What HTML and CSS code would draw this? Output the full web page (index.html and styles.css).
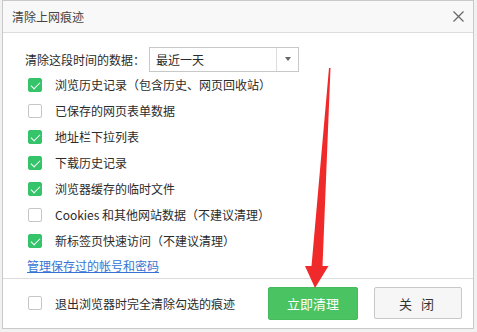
FILE: index.html
```html
<!DOCTYPE html>
<html lang="zh-CN">
<head>
    <meta charset="UTF-8">
    <title>清除上网痕迹</title>
    <link rel="stylesheet" href="styles.css">
</head>
<body>
<div class="dialog">
    <!-- Title bar -->
    <div class="dialog-head">
        <span class="dialog-title">清除上网痕迹</span>
        <span class="close">
            <svg width="11" height="11" viewBox="0 0 11 11"><path d="M0.5 0.5 L10.5 10.5 M10.5 0.5 L0.5 10.5" stroke="#666" stroke-width="1.2" fill="none"/></svg>
        </span>
    </div>

    <!-- Options -->
    <div class="dialog-body">
        <div class="range-row">
            <span class="range-label">清除这段时间的数据：</span>
            <div class="select">
                <span class="select-value">最近一天</span>
                <span class="select-arrow"></span>
            </div>
        </div>
        <ul class="options">
            <li><span class="check on"></span>浏览历史记录（包含历史、网页回收站）</li>
            <li><span class="check"></span>已保存的网页表单数据</li>
            <li><span class="check on"></span>地址栏下拉列表</li>
            <li><span class="check on"></span>下载历史记录</li>
            <li><span class="check on"></span>浏览器缓存的临时文件</li>
            <li><span class="check"></span>Cookies 和其他网站数据（不建议清理）</li>
            <li><span class="check on"></span>新标签页快速访问（不建议清理）</li>
        </ul>
        <a class="manage-link" href="#">管理保存过的帐号和密码</a>
    </div>

    <!-- Footer -->
    <div class="dialog-foot">
        <label class="exit-option"><span class="check"></span>退出浏览器时完全清除勾选的痕迹</label>
        <button class="btn btn-primary">立即清理</button>
        <button class="btn btn-default">关 闭</button>
    </div>
</div>

<!-- red annotation arrow drawn over the dialog -->
<svg class="arrow" width="477" height="332" viewBox="0 0 477 332">
    <polygon points="329,68 330.5,68 322.5,266 328.5,266 315,288 305,266 311.5,266" fill="#f02a2a"/>
</svg>
</body>
</html>
```

FILE: styles.css
```css
* {
    margin: 0;
    padding: 0;
    box-sizing: border-box;
}

body {
    font-family: "Noto Sans CJK SC", "Noto Sans", sans-serif;
    font-size: 12px;
    color: #2b2b2b;
    background: #f1f1f1;
    width: 477px;
    height: 332px;
    position: relative;
    overflow: hidden;
}

.dialog {
    margin-left: 2px;
    width: 472px;
    height: 329px;
    background: #fff;
    border: 1px solid #c9c9c9;
    display: flex;
    flex-direction: column;
}

/* Title bar */
.dialog-head {
    height: 32px;
    background: #f8f8f8;
    border-bottom: 1px solid #dcdcdc;
    display: flex;
    align-items: center;
    justify-content: space-between;
    padding: 0 8px 0 9px;
}

.dialog-title {
    font-size: 12px;
    color: #444;
}

.close {
    display: flex;
    width: 14px;
    justify-content: center;
}

/* Body */
.dialog-body {
    padding: 14px 0 0 22px;
    flex: 1;
}

.range-row {
    display: flex;
    align-items: center;
    height: 25px;
}

.range-label {
    width: 124px;
}

.select {
    width: 150px;
    height: 25px;
    border: 1px solid #c8c8c8;
    display: flex;
    align-items: center;
}

.select-value {
    flex: 1;
    padding-left: 6px;
}

.select-arrow {
    width: 22px;
    height: 100%;
    border-left: 1px solid #dcdcdc;
    display: flex;
    align-items: center;
    justify-content: center;
}

.select-arrow::after {
    content: "";
    border-left: 3px solid transparent;
    border-right: 3px solid transparent;
    border-top: 4px solid #666;
}

.options {
    list-style: none;
}

.options li {
    height: 26px;
    display: flex;
    align-items: center;
}

.check {
    width: 14px;
    height: 14px;
    border: 1px solid #c6c6c6;
    border-radius: 2px;
    background: #fff;
    margin-left: 3px;
    margin-right: 13px;
    position: relative;
    flex-shrink: 0;
}

.check.on {
    background: #35c46a;
    border-color: #35c46a;
}

.check.on::after {
    content: "";
    position: absolute;
    left: 4px;
    top: 1px;
    width: 4px;
    height: 8px;
    border-right: 1px solid #fff;
    border-bottom: 1px solid #fff;
    transform: rotate(45deg);
}

.manage-link {
    display: block;
    margin-left: 2px;
    line-height: 24px;
    color: #3574d4;
    text-decoration: underline;
}

/* Footer */
.dialog-foot {
    height: 51px;
    border-top: 1px solid #dcdcdc;
    display: flex;
    align-items: center;
    padding: 0 11px 0 22px;
}

.exit-option {
    flex: 1;
    display: flex;
    align-items: center;
}

.btn {
    height: 33px;
    font-family: inherit;
    font-size: 13px;
    border-radius: 2px;
    cursor: pointer;
}

.btn-primary {
    width: 90px;
    background: #4ac463;
    border: 1px solid #45bb5d;
    color: #fff;
    margin-right: 16px;
}

.btn-default {
    width: 88px;
    height: 32px;
    background: #f6f6f6;
    border: 1px solid #c8c8c8;
    color: #333;
    letter-spacing: 3px;
}

.arrow {
    position: absolute;
    left: 0;
    top: 0;
    pointer-events: none;
}
```
